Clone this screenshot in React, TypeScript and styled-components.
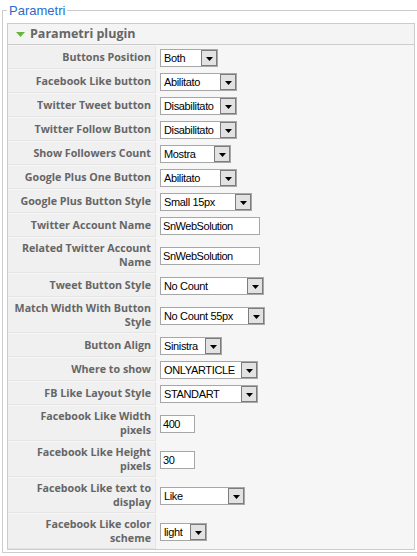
import React from "react";
import styled, { createGlobalStyle } from "styled-components";

const Global = createGlobalStyle`
  html, body { margin: 0; padding: 0; background: #fff; overflow: hidden; }
  body { font-family: "Liberation Sans", Arial, sans-serif; }
`;

const Fieldset = styled.fieldset`
  box-sizing: border-box;
  width: 418px;
  margin: 3px 0 0 2px;
  padding: 5px 4px 2px 4px;
  border: 1px solid #cccccc;
  min-inline-size: 0;
`;

const Legend = styled.legend`
  padding: 0 2px;
  font-size: 13px;
  line-height: 15px;
  color: #2b6bd1;
`;

const Panel = styled.div`
  border: 1px solid #cccccc;
  background: #f6f6f6;
`;

const PanelHeader = styled.div`
  display: flex;
  align-items: center;
  gap: 5px;
  height: 20px;
  padding-left: 8px;
  border-bottom: 1px solid #cccccc;
  background: #f4f4f4;
  color: #666666;
  font-family: "Open Sans", sans-serif;
  font-weight: 700;
  font-size: 12.5px;
  line-height: 20px;
`;

const ParamGrid = styled.div`
  display: grid;
  grid-template-columns: 148px 1fr;
  column-gap: 1px;
  row-gap: 1px;
  padding-top: 1px;
`;

const Key = styled.div`
  box-sizing: border-box;
  min-height: 23px;
  padding: 3px 4px;
  display: flex;
  align-items: center;
  justify-content: flex-end;
  text-align: right;
  background: #f0f0f0;
  border-right: 1px solid #e4e4e4;
  border-bottom: 1px solid #e4e4e4;
  color: #666666;
  font-family: "Open Sans", sans-serif;
  font-weight: 700;
  font-size: 10.7px;
  line-height: 14px;
`;

const Value = styled.div`
  display: flex;
  align-items: center;
  padding-left: 3px;
`;

const SelectBox = styled.div<{ $w: number }>`
  box-sizing: border-box;
  width: ${(p) => p.$w}px;
  height: 18px;
  border: 1px solid #a7a7a7;
  background: #fff;
  display: flex;
  align-items: stretch;
`;

const SelectText = styled.span`
  flex: 1;
  padding-left: 3px;
  font-size: 11px;
  line-height: 16px;
  letter-spacing: -0.35px;
  color: #000;
  white-space: nowrap;
  overflow: hidden;
`;

const DropButton = styled.span`
  box-sizing: border-box;
  width: 16px;
  border: 1px solid #7c7c7c;
  background: #e2e2e2;
  display: flex;
  align-items: center;
  justify-content: center;
  padding-top: 2px;
`;

const TextInput = styled.div<{ $w: number }>`
  box-sizing: border-box;
  width: ${(p) => p.$w}px;
  height: 18px;
  border: 1px solid #a7a7a7;
  background: #fff;
  padding-left: 2px;
  font-size: 11px;
  line-height: 16px;
  letter-spacing: -0.45px;
  color: #000;
`;

type Row = { label: string; kind: "select" | "input"; value: string; w: number };

const rows: Row[] = [
  { label: "Buttons Position", kind: "select", value: "Both", w: 58 },
  { label: "Facebook Like button", kind: "select", value: "Abilitato", w: 77 },
  { label: "Twitter Tweet button", kind: "select", value: "Disabilitato", w: 77 },
  { label: "Twitter Follow Button", kind: "select", value: "Disabilitato", w: 77 },
  { label: "Show Followers Count", kind: "select", value: "Mostra", w: 71 },
  { label: "Google Plus One Button", kind: "select", value: "Abilitato", w: 77 },
  { label: "Google Plus Button Style", kind: "select", value: "Small 15px", w: 92 },
  { label: "Twitter Account Name", kind: "input", value: "SnWebSolution", w: 100 },
  { label: "Related Twitter Account Name", kind: "input", value: "SnWebSolution", w: 100 },
  { label: "Tweet Button Style", kind: "select", value: "No Count", w: 104 },
  { label: "Match Width With Button Style", kind: "select", value: "No Count 55px", w: 105 },
  { label: "Button Align", kind: "select", value: "Sinistra", w: 62 },
  { label: "Where to show", kind: "select", value: "ONLYARTICLE", w: 98 },
  { label: "FB Like Layout Style", kind: "select", value: "STANDART", w: 98 },
  { label: "Facebook Like Width pixels", kind: "input", value: "400", w: 35 },
  { label: "Facebook Like Height pixels", kind: "input", value: "30", w: 35 },
  { label: "Facebook Like text to display", kind: "select", value: "Like", w: 85 },
  { label: "Facebook Like color scheme", kind: "select", value: "light", w: 47 },
];

const Arrow = () => (
  <svg width="7" height="4" viewBox="0 0 7 4">
    <path d="M0 0H7L3.5 4Z" fill="#000" />
  </svg>
);

const Toggle = () => (
  <svg width="9" height="5" viewBox="0 0 9 5">
    <path d="M0 0H9L4.5 5Z" fill="#6db33f" />
  </svg>
);

export default function App() {
  return (
    <>
      <Global />
      <Fieldset>
        <Legend>Parametri</Legend>
        <Panel>
          <PanelHeader>
            <Toggle />
            <span>Parametri plugin</span>
          </PanelHeader>
          <ParamGrid>
            {rows.map((r) => (
              <React.Fragment key={r.label}>
                <Key>{r.label}</Key>
                <Value>
                  {r.kind === "select" ? (
                    <SelectBox $w={r.w}>
                      <SelectText>{r.value}</SelectText>
                      <DropButton>
                        <Arrow />
                      </DropButton>
                    </SelectBox>
                  ) : (
                    <TextInput $w={r.w}>{r.value}</TextInput>
                  )}
                </Value>
              </React.Fragment>
            ))}
          </ParamGrid>
        </Panel>
      </Fieldset>
    </>
  );
}
